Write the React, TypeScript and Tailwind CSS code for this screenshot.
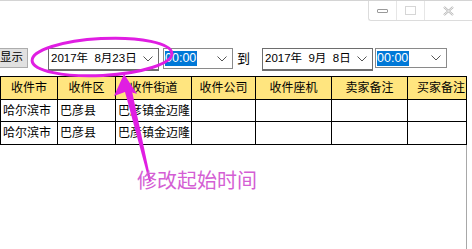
import React from "react";

const cn = '"Liberation Sans", "Noto Sans CJK SC", sans-serif';

function Chevron() {
  return (
    <svg width="10" height="6" viewBox="0 0 10 6" className="shrink-0">
      <polyline points="0.5,0.5 5,5 9.5,0.5" fill="none" stroke="#555" strokeWidth="1" />
    </svg>
  );
}

const cols = [
  { w: 57, t: "收件市" },
  { w: 58, t: "收件区" },
  { w: 76, t: "收件街道" },
  { w: 64, t: "收件公司" },
  { w: 76, t: "收件座机" },
  { w: 76, t: "卖家备注" },
  { w: 59, t: "买家备注" },
];

const rows = [
  ["哈尔滨市", "巴彦县", "巴彦镇金迈隆", "", "", "", ""],
  ["哈尔滨市", "巴彦县", "巴彦镇金迈隆", "", "", "", ""],
];

export default function App() {
  return (
    <div
      className="relative w-[472px] h-[249px] bg-white overflow-hidden flex flex-col text-black"
      style={{ fontFamily: cn }}
    >
      {/* top bar with window controls */}
      <div className="h-[48px] flex justify-end border-t border-[#d4d4d4]">
        <div className="w-[104px] h-[20px] flex border-l border-b border-[#dcdcdc] rounded-bl-[3px]">
          <div className="w-[28px] flex items-center justify-center border-r border-[#e6e6e6]">
            <div className="w-[11px] h-[4px] border border-[#9a9a9a] rounded-[1px]" />
          </div>
          <div className="w-[28px] flex items-center justify-center border-r border-[#e6e6e6]">
            <div className="w-[11px] h-[9px] border border-[#d6d6d6]" />
          </div>
          <div className="flex-1 flex items-center justify-center">
            <svg width="11" height="10" viewBox="0 0 11 10">
              <path d="M1 1 L10 9 M10 1 L1 9" stroke="#b4b4b4" strokeWidth="2.2" />
              <path d="M1 1 L10 9 M10 1 L1 9" stroke="#fff" strokeWidth="0.8" />
            </svg>
          </div>
        </div>
      </div>

      {/* toolbar row */}
      <div className="h-[28px] flex items-start text-[12px] leading-none">
        <div className="w-[28px] h-[20px] bg-[#e1e1e1] border border-[#adadad] border-l-0 flex items-center justify-start overflow-hidden">
          <span className="whitespace-nowrap text-[11.5px]">显示</span>
        </div>
        <div className="w-[20px]" />
        <div className="w-[111px] h-[23px] border border-[#6d6d6d] border-b-2 flex items-center pl-[2px] pr-[5px] bg-white">
          <span className="whitespace-pre flex-1 text-[11.5px]">2017年  8月23日</span>
          <Chevron />
        </div>
        <div className="w-[4px]" />
        <div className="w-[70px] h-[21px] border border-[#8a8a8a] flex items-center pl-[1px] pr-[5px] bg-white">
          <span className="bg-[#0078d7] text-white h-[15px] w-[32px] flex items-center text-[12.5px]">00:00</span>
          <div className="flex-1" />
          <Chevron />
        </div>
        <div className="w-[29px] h-[21px] flex items-center justify-start pl-[4px] text-[13px]">到</div>
        <div className="w-[111px] h-[23px] border border-[#6d6d6d] border-b-2 flex items-center pl-[2px] pr-[5px] bg-white">
          <span className="whitespace-pre flex-1 text-[11.5px]">2017年  9月  8日</span>
          <Chevron />
        </div>
        <div className="w-[2px]" />
        <div className="w-[72px] h-[20px] border border-[#8a8a8a] flex items-center pl-[1px] pr-[5px] bg-white">
          <span className="bg-[#0078d7] text-white h-[15px] w-[32px] flex items-center text-[12.5px]">00:00</span>
          <div className="flex-1" />
          <Chevron />
        </div>
      </div>

      {/* table */}
      <div className="w-[467px] border border-black text-[12px] leading-none">
        <div className="flex h-[23px] bg-[#ffe57f] border-b border-black">
          {cols.map((c, i) => {
            const last = i === cols.length - 1;
            return (
              <div
                key={i}
                className={`flex items-center overflow-hidden whitespace-nowrap ${last ? "justify-start pl-[9px]" : "justify-center border-r border-black"}`}
                style={{ width: last ? undefined : c.w, flex: last ? 1 : undefined }}
              >
                {c.t}
              </div>
            );
          })}
        </div>
        {rows.map((r, ri) => (
          <div key={ri} className={`flex h-[22px] ${ri < rows.length - 1 ? "border-b border-black" : ""}`}>
            {r.map((v, i) => (
              <div
                key={i}
                className={`flex items-center pl-[2px] overflow-hidden whitespace-nowrap ${i < cols.length - 1 ? "border-r border-black" : ""}`}
                style={{ width: i < cols.length - 1 ? cols[i].w : undefined, flex: i === cols.length - 1 ? 1 : undefined }}
              >
                {v}
              </div>
            ))}
          </div>
        ))}
      </div>
      <div className="flex-1 w-[467px] border-r border-[#a8a8a8]" />

      {/* annotation overlay */}
      <svg className="absolute left-0 top-0 pointer-events-none" width="472" height="249" viewBox="0 0 472 249">
        <ellipse cx="102" cy="57" rx="70" ry="18.5" fill="none" stroke="#e01ee2" strokeWidth="3" transform="rotate(-3 102 57)" />
        <polygon points="124,74 114,96 125,92 131,92 137,94" fill="#e01ee2" />
        <polygon points="125,92 132,91 151,181 149,181" fill="#e01ee2" />
      </svg>
      <div
        className="absolute left-[137px] top-[170px] text-[20px] leading-none text-[#d45ed4] whitespace-nowrap"
        style={{ fontFamily: '"Noto Sans CJK SC", sans-serif' }}
      >
        修改起始时间
      </div>
    </div>
  );
}
